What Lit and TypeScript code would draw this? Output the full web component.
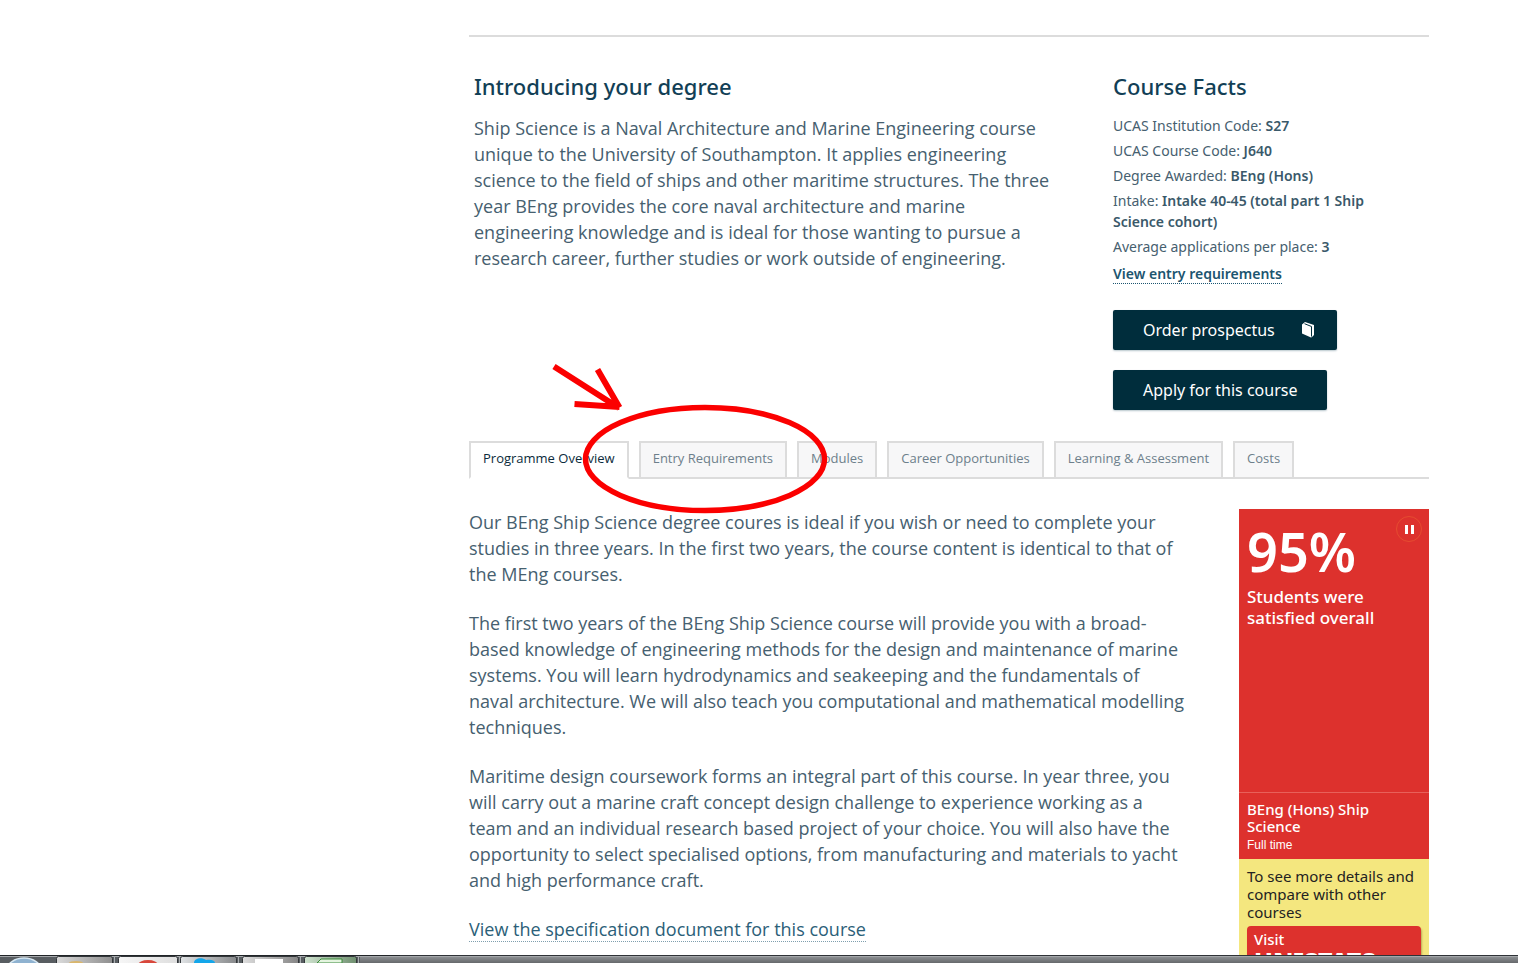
import { LitElement, html, css, svg } from "lit";
import { customElement, state } from "lit/decorators.js";

const TABS = [
  "Programme Overview",
  "Entry Requirements",
  "Modules",
  "Career Opportunities",
  "Learning & Assessment",
  "Costs",
];

const FACTS: [string, string][] = [
  ["UCAS Institution Code:", "S27"],
  ["UCAS Course Code:", "J640"],
  ["Degree Awarded:", "BEng (Hons)"],
  ["Intake:", "Intake 40-45 (total part 1 Ship Science cohort)"],
  ["Average applications per place:", "3"],
];

const OVERVIEW = [
  "Our BEng Ship Science degree coures is ideal if you wish or need to complete your studies in three years. In the first two years, the course content is identical to that of the MEng courses.",
  "The first two years of the BEng Ship Science course will provide you with a broad-based knowledge of engineering methods for the design and maintenance of marine systems. You will learn hydrodynamics and seakeeping and the fundamentals of naval architecture. We will also teach you computational and mathematical modelling techniques.",
  "Maritime design coursework forms an integral part of this course. In year three, you will carry out a marine craft concept design challenge to experience working as a team and an individual research based project of your choice. You will also have the opportunity to select specialised options, from manufacturing and materials to yacht and high performance craft.",
];

/* Red marker: arrow and ring around the second tab. */
@customElement("marker-ring")
class MarkerRing extends LitElement {
  static styles = css`
    :host {
      position: absolute;
      left: 0;
      top: -91px;
      pointer-events: none;
    }
    svg {
      display: block;
    }
  `;
  render() {
    return html`<svg width="400" height="180" viewBox="0 0 400 180" fill="none" stroke="#fb0000" aria-hidden="true">
      <ellipse cx="236" cy="109" rx="119.500" ry="51.500" stroke-width="5.500" />
      <path d="M85 16.500 150 58M128.500 19.500l22 38M105.500 54l45 3" stroke-width="6" />
    </svg>`;
  }
}

/* Course statistics widget. */
@customElement("stats-widget")
class StatsWidget extends LitElement {
  static styles = css`
    :host {
      display: block;
      font-family: "Noto Sans", "Open Sans", sans-serif;
    }
    .top {
      background: #dd312d;
      color: #fff;
      position: relative;
      height: 284px;
      box-sizing: border-box;
      padding: 8px;
      border-bottom: 1px solid #e8605a;
    }
    .value {
      font-size: 54px;
      line-height: 69px;
      font-weight: 600;
      margin: 0;
    }
    .label {
      font-size: 17px;
      line-height: 21px;
      font-weight: 500;
      margin: 0;
    }
    .pause {
      position: absolute;
      right: 7px;
      top: 7px;
      width: 26px;
      height: 26px;
      padding: 0;
      border: 1px solid #e64c30;
      border-radius: 50%;
      background: none;
    }
    .pause svg {
      display: block;
      margin: auto;
    }
    .course {
      background: #dd312d;
      color: #fff;
      padding: 8px 8px 5px;
    }
    .name {
      font-size: 15px;
      line-height: 17px;
      font-weight: 500;
      margin: 0 0 1px;
    }
    .mode {
      font: 12px/18px "Liberation Sans", sans-serif;
      margin: 0;
    }
    .more {
      background: #f4e77f;
      color: #222;
      padding: 8px 8px 40px;
    }
    .more p {
      font-size: 15px;
      line-height: 18px;
      margin: 0 0 5px;
    }
    .visit {
      display: block;
      background: #dd312d;
      color: #fff;
      border-radius: 4px;
      box-shadow: 1px 2px 2px #b9ac58;
      padding: 4px 7px;
      text-decoration: none;
      font-size: 15px;
      font-weight: 500;
      line-height: 18px;
    }
    .brand {
      display: block;
      font-size: 25px;
      line-height: 26px;
      font-weight: 800;
    }
  `;
  render() {
    return html`
      <div class="top">
        <p class="value">95%</p>
        <p class="label">Students were satisfied overall</p>
        <button class="pause" aria-label="Pause">
          <svg width="9" height="9" viewBox="0 0 9 9" fill="#fff"><path d="M0 0h3v9H0zM6 0h3v9H6z" /></svg>
        </button>
      </div>
      <div class="course">
        <p class="name">BEng (Hons) Ship Science</p>
        <p class="mode">Full time</p>
      </div>
      <div class="more">
        <p>To see more details and compare with other courses</p>
        <a class="visit" href="#">Visit <span class="brand">UNISTATS</span></a>
      </div>
    `;
  }
}

/* Desktop strip with the visible tops of the task buttons. */
@customElement("task-strip")
class TaskStrip extends LitElement {
  static styles = css`
    :host {
      display: block;
      height: 8px;
      background: linear-gradient(#2e3236 0 1px, #a4a7aa 1px 2px, #8a8d90 2px, #66696c);
    }
    svg {
      display: block;
    }
  `;
  render() {
    const task = (x: number, w: number, from: string, to: string) => svg`
      <linearGradient id=${"g" + x}><stop stop-color=${from} /><stop offset="1" stop-color=${to} /></linearGradient>
      <rect x=${x + 0.5} y="1.500" width=${w - 4} height="9" rx="2" fill=${`url(#g${x})`} stroke="#33373a" />
      <path d=${`M${x + w - 1.5} 2v6`} stroke="#a9adb0" />`;
    return html`<svg width="400" height="8" viewBox="0 0 400 8" aria-hidden="true">
      <rect x="0" y="2" width="360" height="6" fill="#585d61" />
      <rect x="0" y="0" width="400" height="1" fill="#202427" />
      <ellipse cx="24" cy="15" rx="17" ry="12" fill="#8fb2d0" stroke="#d6e7f2" stroke-width="1.500" />
      ${task(56, 60, "#dadada", "#8f8f8f")}${task(118, 63, "#f6f6f6", "#dedede")}
      ${task(180, 60, "#dfe2e4", "#87898b")}${task(242, 60, "#dedede", "#858585")}
      ${task(304, 56, "#cfe3cf", "#6f8f6f")}
      <ellipse cx="76" cy="8" rx="7" ry="2" fill="#d9b66c" />
      <ellipse cx="148" cy="10" rx="10" ry="5" fill="#d8473b" />
      <path d="M194 8c0-5 8-6 12-3 6-1 9 1 9 3z" fill="#13a6ea" />
      <path d="M255 4h28v4h-28z" fill="#fff" />
      <path d="M317 8l4-4h21v4z" fill="#e4f4df" stroke="#3a8a3a" />
    </svg>`;
  }
}

@customElement("app-root")
class AppRoot extends LitElement {
  @state() active = 0;

  static styles = css`
    :host {
      display: flex;
      flex-direction: column;
      height: 100vh;
      overflow: hidden;
      background: #fff;
      color: #46606f;
      font-family: "Open Sans", "Noto Sans", sans-serif;
    }
    main {
      flex: 1;
      min-height: 0;
      overflow: hidden;
      padding: 35px 89px 0 469px;
    }
    .intro {
      display: grid;
      grid-template-columns: 2fr 1fr;
      border-top: 2px solid #dcdcdc;
      padding-top: 34px;
    }
    .about {
      padding: 0 55px 0 5px;
    }
    .facts {
      padding: 0 40px 0 4px;
      font-family: "Noto Sans", "Open Sans", sans-serif;
    }
    h2 {
      margin: 0;
      font-family: "Noto Sans", "Open Sans", sans-serif;
      font-size: 22px;
      line-height: 30px;
      font-weight: 500;
      color: #123f56;
    }
    p {
      margin: 0;
      font-size: 18px;
      line-height: 26px;
    }
    .about p {
      margin-top: 14px;
    }
    dl {
      margin: 14px 0 5px;
      font-size: 14px;
      line-height: 21px;
    }
    dl div {
      margin-bottom: 4px;
    }
    dt,
    dd {
      display: inline;
      margin: 0;
    }
    dd {
      font-weight: 600;
      color: #3a596a;
    }
    .entry {
      color: #1c5570;
      font-size: 14px;
      line-height: 18px;
      font-weight: 600;
      text-decoration: none;
      border-bottom: 1px dotted #1c5570;
    }
    .actions {
      display: flex;
      flex-direction: column;
      align-items: flex-start;
      gap: 20px;
      margin-top: 26px;
    }
    .action {
      display: flex;
      align-items: center;
      gap: 26px;
      height: 40px;
      padding: 0 30px;
      border: 0;
      border-radius: 2px;
      background: #002d3c;
      color: #fff;
      font: 16px/24px "Noto Sans", "Open Sans", sans-serif;
      box-shadow: 0 1px 2px #b8c6cc;
    }
    .action.book {
      padding-right: 22px;
    }
    .tabs {
      position: relative;
      display: flex;
      gap: 10px;
      margin-top: 31px;
      border-bottom: 2px solid #dcdcdc;
    }
    .tab {
      height: 38px;
      margin-bottom: -2px;
      padding: 0 12px 4px;
      border: 2px solid #dcdcdc;
      background: #f7f7f8;
      color: #6d7f8b;
      font: 13px/20px "Open Sans", "Noto Sans", sans-serif;
      white-space: nowrap;
    }
    .tab.on {
      border-bottom-color: #fff;
      background: #fff;
      color: #0b2b3b;
    }
    .body {
      display: grid;
      grid-template-columns: minmax(0, 1fr) 190px;
      gap: 54px;
      align-items: start;
      padding-top: 30px;
    }
    .copy p {
      margin-bottom: 23px;
    }
    .spec {
      color: #2b6078;
      text-decoration: none;
      border-bottom: 1px dotted #7f9fae;
    }
  `;

  render() {
    return html`
      <main>
        <section class="intro">
          <div class="about">
            <h2>Introducing your degree</h2>
            <p>
              Ship Science is a Naval Architecture and Marine Engineering course unique to the University of
              Southampton. It applies engineering science to the field of ships and other maritime structures. The
              three year BEng provides the core naval architecture and marine engineering knowledge and is ideal for
              those wanting to pursue a research career, further studies or work outside of engineering.
            </p>
          </div>
          <div class="facts">
            <h2>Course Facts</h2>
            <dl>
              ${FACTS.map(([k, v]) => html`<div><dt>${k}</dt> <dd>${v}</dd></div>`)}
            </dl>
            <a class="entry" href="#">View entry requirements</a>
            <div class="actions">
              <button class="action book">
                Order prospectus
                <svg width="14" height="18" viewBox="0 0 14 18" aria-hidden="true">
                  <path d="M1 3.500 4 1l9 3v10l-2 2-1 .5-9-4z" fill="#fff" />
                  <path d="M3.500 2.700 10.500 5.500v10" fill="none" stroke="#002d3c" />
                </svg>
              </button>
              <button class="action">Apply for this course</button>
            </div>
          </div>
        </section>
        <div class="tabs" role="tablist">
          ${TABS.map(
            (t, i) => html`<button
              class=${i === this.active ? "tab on" : "tab"}
              role="tab"
              aria-selected=${i === this.active}
              @click=${() => (this.active = i)}
            >${t}</button>`
          )}
          <marker-ring></marker-ring>
        </div>
        <section class="body">
          <div class="copy">
            ${OVERVIEW.map((t) => html`<p>${t}</p>`)}
            <p><a class="spec" href="#">View the specification document for this course</a></p>
          </div>
          <stats-widget></stats-widget>
        </section>
      </main>
      <task-strip></task-strip>
    `;
  }
}
